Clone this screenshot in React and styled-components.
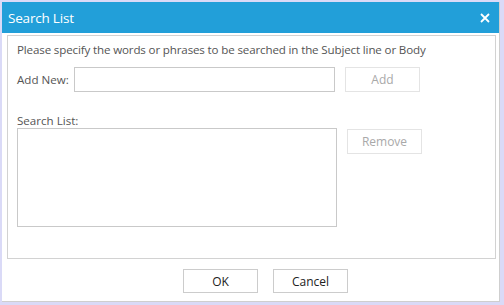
import React from 'react'
import styled, { createGlobalStyle } from 'styled-components'

const GlobalStyle = createGlobalStyle`
    html, body {
        margin: 0;
        padding: 0;
        background: #dadaf7;
    }
    body {
        font-family: 'Open Sans', 'Noto Sans', sans-serif;
    }
`

const Window = styled.div`
    width: 497px;
    height: 299px;
    margin: 2px 0 0 2px;
    background: #fff;
    border-right: 1px solid #cfcfcf;
    border-bottom: 1px solid #cfcfcf;
    display: flex;
    flex-direction: column;
`

const TitleBar = styled.div`
    height: 31px;
    flex-shrink: 0;
    background: #229fd9;
    display: flex;
    align-items: center;
    justify-content: space-between;
    padding: 0 6px 0 6px;
    color: #fff;
    font-size: 13.5px;
`

const Title = styled.span`
    letter-spacing: -0.2px;
    margin-top: 1px;
`

const CloseIcon = styled.svg`
    width: 10px;
    height: 10px;
    margin-right: 3px;
`

const Panel = styled.div`
    margin: 2px 3px 0 5px;
    height: 216px;
    flex-shrink: 0;
    border: 1px solid #d2d2d2;
    padding: 6px 0 0 9px;
    color: #555;
    font-size: 11.6px;
`

const Description = styled.div`
    line-height: 16px;
    letter-spacing: -0.15px;
`

const Row = styled.div`
    display: flex;
    align-items: flex-start;
    gap: 10px;
    margin-top: ${(p) => p.$top || 0}px;
`

const Label = styled.label`
    width: 47px;
    line-height: 25px;
    white-space: nowrap;
`

const Input = styled.div`
    width: 259px;
    height: 23px;
    border: 1px solid #c9c9c9;
`

const Button = styled.button`
    width: ${(p) => p.$width || 75}px;
    height: ${(p) => p.$height || 25}px;
    margin-top: ${(p) => p.$top || 0}px;
    background: #fff;
    border: 1px solid ${(p) => (p.$disabled ? '#e4e4e4' : '#cccccc')};
    color: ${(p) => (p.$disabled ? '#a9a9a9' : '#222')};
    font-family: inherit;
    font-size: 12px;
    padding: 0;
`

const ListLabel = styled.div`
    margin-top: 21px;
    line-height: 15px;
`

const ListBox = styled.div`
    width: 318px;
    height: 97px;
    border: 1px solid #c9c9c9;
`

const Footer = styled.div`
    display: flex;
    gap: 15px;
    padding: 10px 0 0 181px;
`

export default function App() {
    return (
        <>
            <GlobalStyle />
            <Window>
                <TitleBar>
                    <Title>Search List</Title>
                    <CloseIcon viewBox="0 0 10 10">
                        <path d="M1 1 L9 9 M9 1 L1 9" stroke="#fff" strokeWidth="1.8" />
                    </CloseIcon>
                </TitleBar>
                <Panel>
                    <Description>
                        Please specify the words or phrases to be searched in the Subject line or Body
                    </Description>
                    <Row $top={9}>
                        <Label>Add New:</Label>
                        <Input />
                        <Button $disabled>Add</Button>
                    </Row>
                    <ListLabel>Search List:</ListLabel>
                    <Row>
                        <ListBox />
                        <Button $disabled $top={1}>Remove</Button>
                    </Row>
                </Panel>
                <Footer>
                    <Button $height={24}>OK</Button>
                    <Button $height={24}>Cancel</Button>
                </Footer>
            </Window>
        </>
    )
}
